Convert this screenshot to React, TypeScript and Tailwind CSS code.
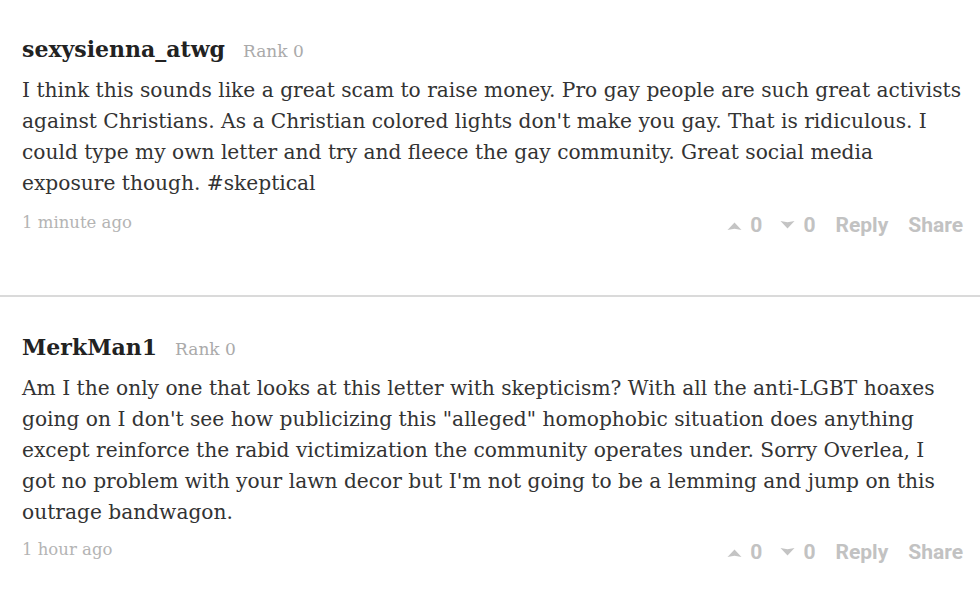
import React from 'react';

type Comment = {
  user: string;
  rank: string;
  lines: string[];
  time: string;
};

const comments: Comment[] = [
  {
    user: 'sexysienna_atwg',
    rank: 'Rank 0',
    lines: [
      'I think this sounds like a great scam to raise money. Pro gay people are such great activists',
      "against Christians. As a Christian colored lights don't make you gay. That is ridiculous. I",
      'could type my own letter and try and fleece the gay community. Great social media',
      'exposure though. #skeptical',
    ],
    time: '1 minute ago',
  },
  {
    user: 'MerkMan1',
    rank: 'Rank 0',
    lines: [
      'Am I the only one that looks at this letter with skepticism? With all the anti-LGBT hoaxes',
      'going on I don\'t see how publicizing this "alleged" homophobic situation does anything',
      'except reinforce the rabid victimization the community operates under. Sorry Overlea, I',
      "got no problem with your lawn decor but I'm not going to be a lemming and jump on this",
      'outrage bandwagon.',
    ],
    time: '1 hour ago',
  },
];

const serif = "font-['DejaVu_Serif',Georgia,serif]";

function Arrow({ down }: { down?: boolean }) {
  return (
    <svg width="17" height="11" viewBox="0 0 17 11" className={down ? 'rotate-180' : ''}>
      <path d="M1.5 10 L8.5 2.5 L15.5 10 L8.5 8.8 Z" fill="#c4c4c4" />
    </svg>
  );
}

function CommentItem({ c, first }: { c: Comment; first: boolean }) {
  return (
    <div className={`${first ? 'pt-[35px] pb-[54px]' : 'pt-[36px] pb-[56px] border-t-2 border-[#dadada]'} pl-[22px] pr-[17px]`}>
      <div className="flex items-baseline gap-[18px]">
        <span className={`${serif} text-[22px] leading-[28px] font-bold text-[#222]`}>{c.user}</span>
        <span className={`${serif} text-[17px] text-[#aaa]`}>{c.rank}</span>
      </div>
      <p className={`${serif} mt-[10px] text-[20.2px] leading-[31px] text-[#333]`}>
        {c.lines.map((l, i) => (
          <span key={i} className="block whitespace-nowrap">{l}</span>
        ))}
      </p>
      <div className={`${first ? 'mt-[7px]' : 'mt-[5px]'} flex items-center justify-between`}>
        <span className={`${serif} text-[16.5px] leading-[24px] text-[#b4b4b4]`}>{c.time}</span>
        <div className="flex items-center font-['Roboto',sans-serif] font-bold text-[21px] text-[#c2c2c2] mt-[4px]">
          <Arrow />
          <span className="ml-[7px]">0</span>
          <span className="ml-[17px]"><Arrow down /></span>
          <span className="ml-[7px]">0</span>
          <span className="ml-[20px]">Reply</span>
          <span className="ml-[20px]">Share</span>
        </div>
      </div>
    </div>
  );
}

export default function App() {
  return (
    <div className="w-[980px] h-[603px] bg-white overflow-hidden">
      {comments.map((c, i) => (
        <CommentItem key={c.user} c={c} first={i === 0} />
      ))}
    </div>
  );
}
